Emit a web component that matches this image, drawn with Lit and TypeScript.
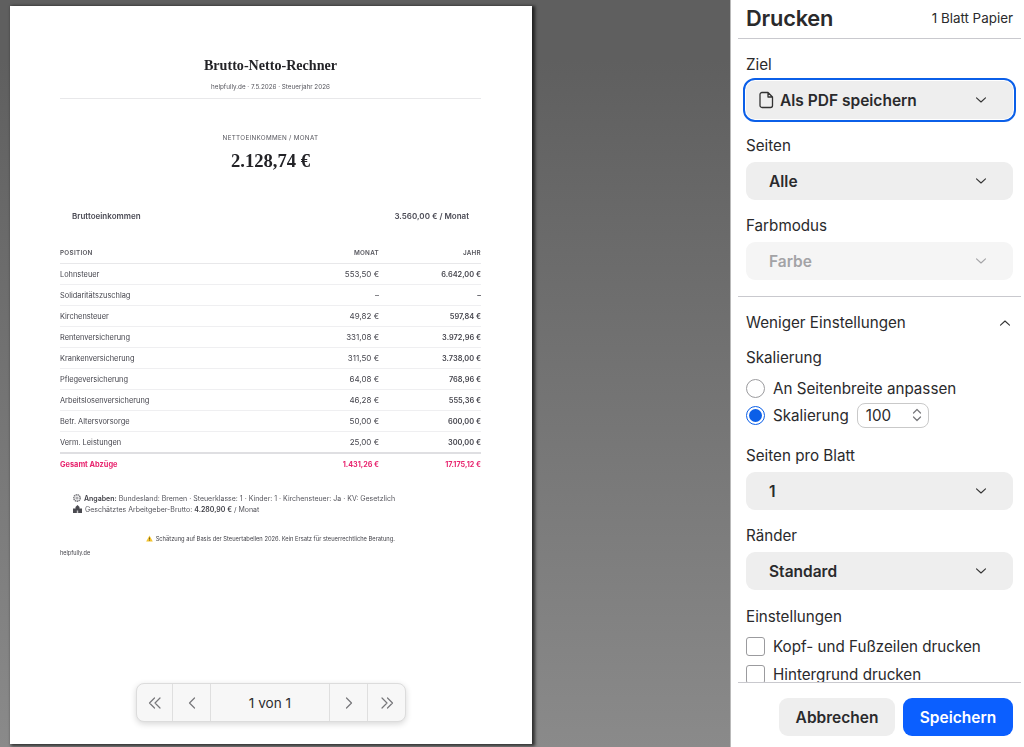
import { LitElement, html, css, svg } from 'lit';
import { customElement } from 'lit/decorators.js';

const rows = [
  ['Lohnsteuer', '553,50 €', '6.642,00 €'],
  ['Solidaritätszuschlag', '–', '–'],
  ['Kirchensteuer', '49,82 €', '597,84 €'],
  ['Rentenversicherung', '331,08 €', '3.972,96 €'],
  ['Krankenversicherung', '311,50 €', '3.738,00 €'],
  ['Pflegeversicherung', '64,08 €', '768,96 €'],
  ['Arbeitslosenversicherung', '46,28 €', '555,36 €'],
  ['Betr. Altersvorsorge', '50,00 €', '600,00 €'],
  ['Verm. Leistungen', '25,00 €', '300,00 €'],
];

const chevronDown = html`<svg class="chev" width="12" height="8" viewBox="0 0 12 8"><path d="M1.5 1.8 6 6l4.5-4.2" fill="none" stroke="currentColor" stroke-width="1.1" stroke-linecap="round" stroke-linejoin="round"/></svg>`;

const pager = (d: string) => html`<svg width="16" height="14" viewBox="0 0 16 14">${svg`<path d=${d} fill="none" stroke="#77777a" stroke-width="1.2" stroke-linecap="round" stroke-linejoin="round"/>`}</svg>`;

@customElement('app-root')
export class AppRoot extends LitElement {
  static styles = css`
    :host {
      display: block;
      width: 1024px;
      height: 747px;
      overflow: hidden;
      font-family: Inter, "Liberation Sans", sans-serif;
    }
    .screen {
      display: flex;
      height: 747px;
    }

    /* preview */
    .preview {
      position: relative;
      flex: 1;
      padding: 6px 198px 0 10px;
      background: linear-gradient(#5f5f5f 0, #5f5f5f 60px, #8a8a8a 100%);
    }
    .page {
      height: 738px;
      box-sizing: border-box;
      padding: 50px 51px 0 50px;
      background: #fff;
      box-shadow: 2px 1px 3px 1px rgba(0, 0, 0, 0.65);
      color: #45454d;
      font-size: 8px;
      filter: blur(0.3px);
    }
    .title {
      margin: 0;
      text-align: center;
      font-family: "Liberation Serif", serif;
      font-size: 14.1px;
      line-height: 18px;
      font-weight: 700;
      color: #232327;
    }
    .sub {
      margin-top: 8px;
      padding-bottom: 6px;
      border-bottom: 1px solid #e8e8ea;
      text-align: center;
      font-size: 6.3px;
      line-height: 10px;
      color: #55555c;
    }
    .net {
      margin-top: 35px;
      text-align: center;
    }
    .net-label {
      font-size: 6.3px;
      line-height: 9px;
      letter-spacing: 0.3px;
      color: #55555c;
    }
    .net-value {
      margin-top: 7px;
      font-family: "Liberation Serif", serif;
      font-size: 18.6px;
      line-height: 22px;
      font-weight: 700;
      color: #232327;
    }
    .gross {
      display: flex;
      justify-content: space-between;
      margin-top: 39px;
      padding: 0 12px;
      line-height: 11px;
      font-weight: 600;
      color: #4b4b55;
    }
    .table {
      margin-top: 24px;
    }
    .tr {
      display: grid;
      grid-template-columns: 1fr 102px 102px;
      align-items: center;
      height: 20px;
      border-bottom: 1px solid #efeff1;
    }
    .tr span:first-child {
      font-size: 7.4px;
    }
    .tr span:not(:first-child) {
      text-align: right;
    }
    .tr b {
      font-size: 7.4px;
      font-weight: 600;
    }
    .tr.head {
      height: 13px;
      padding-bottom: 4px;
      font-size: 6.3px;
      font-weight: 600;
      letter-spacing: 0.3px;
      color: #55555c;
      border-bottom-color: #e8e8ea;
    }
    .tr.head span:first-child {
      font-size: 6.3px;
    }
    .tr.last {
      border-bottom: 2px solid #dfdfe2;
    }
    .tr.total {
      height: 21px;
      border: 0;
      font-size: 7.2px;
      font-weight: 700;
      color: #e8256f;
    }
    .tr.total span:first-child {
      font-size: 7.4px;
    }
    .info {
      margin-top: 19px;
      padding-left: 13px;
      font-size: 7px;
      line-height: 10.5px;
      color: #55555c;
    }
    .info b {
      font-weight: 600;
      color: #3f3f46;
    }
    .info svg {
      vertical-align: -1px;
      margin-right: 1px;
    }
    .note {
      margin-top: 19px;
      text-align: center;
      font-size: 5.75px;
      line-height: 10px;
      color: #3f3f46;
    }
    .note svg {
      vertical-align: -1px;
      margin-right: 1px;
    }
    .foot {
      margin-top: 4px;
      font-size: 5.5px;
      line-height: 10px;
      color: #3f3f46;
    }
    .pager {
      position: absolute;
      left: 136px;
      top: 683px;
      display: flex;
      width: 270px;
      height: 39px;
      box-sizing: border-box;
      border: 1px solid #dcdcdc;
      border-radius: 8px;
      background: #f7f7f7;
      box-shadow: 0 2px 6px rgba(0, 0, 0, 0.16);
      font-size: 13.6px;
      color: #2c2c2e;
    }
    .pager div {
      display: flex;
      align-items: center;
      justify-content: center;
      width: 38px;
      box-sizing: border-box;
      border-right: 1px solid #dfdfdf;
    }
    .pager div:first-child {
      width: 36px;
    }
    .pager div:nth-child(3) {
      flex: 1;
    }
    .pager div:last-child {
      width: 37px;
      border-right: 0;
    }

    /* sidebar */
    .side {
      display: flex;
      flex-direction: column;
      width: 294px;
      box-sizing: border-box;
      border-left: 1px solid #b9b9b9;
      background: #fff;
      color: #2a2a2c;
      font-size: 15.2px;
    }
    .side-head {
      display: flex;
      align-items: center;
      justify-content: space-between;
      height: 39px;
      margin: 0 3px 0 7px;
      padding: 0 8px 3px 8px;
      box-sizing: border-box;
      border-bottom: 1px solid #c9c9ce;
    }
    .side-head h2 {
      margin: 0;
      font-size: 21.8px;
      font-weight: 600;
      letter-spacing: -0.2px;
    }
    .side-head span {
      font-size: 13.4px;
    }
    .scroll {
      flex: 1;
      min-height: 0;
      overflow: hidden;
      margin: 0 3px 0 7px;
      padding: 0 8px;
      border-bottom: 1px solid #c9c9ce;
    }
    .label {
      height: 19px;
      line-height: 19px;
      margin: 16px 0 7px;
    }
    .label.settings {
      margin-top: 17px;
    }
    .select {
      display: flex;
      align-items: center;
      justify-content: space-between;
      height: 38px;
      padding: 0 26px 0 23px;
      border-radius: 9px;
      background: #eeeeee;
      font-size: 15.5px;
      font-weight: 600;
    }
    .select.pdf {
      padding-left: 13px;
      margin-bottom: 17px;
      outline: 2.5px solid #0b5fe8;
      outline-offset: 1.5px;
    }
    .select.off {
      background: #f5f5f5;
      color: #a3a3a6;
    }
    .pdf-name {
      display: flex;
      align-items: center;
      gap: 6px;
    }
    .chev {
      color: #333;
    }
    .off .chev {
      color: #a3a3a6;
    }
    .rule {
      height: 1px;
      margin: 16px -8px 0 -8px;
      background: #c9c9ce;
    }
    .more {
      display: flex;
      align-items: center;
      justify-content: space-between;
      height: 19px;
      margin-top: 16px;
      padding-right: 2px;
    }
    .opt {
      display: flex;
      align-items: center;
      gap: 8px;
      height: 22px;
    }
    .opts {
      display: grid;
      row-gap: 5px;
      margin: 10px 0 20px;
    }
    .radio {
      width: 19px;
      height: 19px;
      box-sizing: border-box;
      border: 1px solid #9b9b9e;
      border-radius: 50%;
      background: #fff;
    }
    .radio.on {
      border: 1.5px solid #0b5fe8;
      padding: 2px;
      background: #0b5fe8 content-box;
    }
    .num {
      display: flex;
      align-items: center;
      justify-content: space-between;
      width: 72px;
      height: 25px;
      padding: 0 6px 0 8px;
      box-sizing: border-box;
      border: 1px solid #c9c9c9;
      border-radius: 8px;
    }
    .checks {
      display: grid;
      row-gap: 6px;
      margin-top: 9px;
    }
    .box {
      width: 19px;
      height: 19px;
      box-sizing: border-box;
      border: 1px solid #9b9b9e;
      border-radius: 3px;
    }
    .side-foot {
      display: flex;
      justify-content: flex-end;
      gap: 8px;
      height: 64px;
      box-sizing: border-box;
      padding: 15px 11px 0 0;
    }
    .btn {
      display: flex;
      align-items: center;
      justify-content: center;
      height: 38px;
      border-radius: 9px;
      font-size: 15.5px;
      font-weight: 600;
    }
    .cancel {
      width: 116px;
      background: #eeeeee;
    }
    .save {
      width: 110px;
      background: #0b5fff;
      color: #fff;
    }
  `;

  render() {
    return html`
      <div class="screen">
        <div class="preview">
          <div class="page">
            <h1 class="title">Brutto-Netto-Rechner</h1>
            <div class="sub">helpfully.de · 7.5.2026 · Steuerjahr 2026</div>
            <div class="net">
              <div class="net-label">NETTOEINKOMMEN / MONAT</div>
              <div class="net-value">2.128,74 €</div>
            </div>
            <div class="gross"><span>Bruttoeinkommen</span><span>3.560,00 € / Monat</span></div>
            <div class="table">
              <div class="tr head"><span>POSITION</span><span>MONAT</span><span>JAHR</span></div>
              ${rows.map(
                (r, i) => html`<div class="tr ${i === rows.length - 1 ? 'last' : ''}">
                  <span>${r[0]}</span><span>${r[1]}</span><span><b>${r[2]}</b></span>
                </div>`
              )}
              <div class="tr total"><span>Gesamt Abzüge</span><span>1.431,26 €</span><span>17.175,12 €</span></div>
            </div>
            <div class="info">
              <div>
                <svg width="8" height="8" viewBox="0 0 8 8"><circle cx="4" cy="4" r="3.2" fill="none" stroke="#77777c" stroke-width="1.5" stroke-dasharray="1.4 .5"/><circle cx="4" cy="4" r="1.6" fill="#a8a8ac"/></svg>
                <b>Angaben:</b> Bundesland: Bremen · Steuerklasse: 1 · Kinder: 1 · Kirchensteuer: Ja · KV: Gesetzlich
              </div>
              <div>
                <svg width="9" height="8" viewBox="0 0 9 8"><path d="M0 8V3.5h2.500V2L4.500 0l2 2v1.500H9V8z" fill="#4a4a50"/><path d="M3.800 8V5.500h1.400V8z" fill="#c9c9cc"/></svg>
                Geschätztes Arbeitgeber-Brutto: <b>4.280,90 €</b> / Monat
              </div>
            </div>
            <div class="note">
              <svg width="7" height="7" viewBox="0 0 7 7"><path d="M3.500.4 6.800 6.600H.2z" fill="#f4c430"/><path d="M3.500 2.400v2.200M3.500 5.200v.6" stroke="#4a3c10" stroke-width=".7"/></svg>
              Schätzung auf Basis der Steuertabellen 2026. Kein Ersatz für steuerrechtliche Beratung.
            </div>
            <div class="foot">helpfully.de</div>
          </div>
          <div class="pager">
            <div>${pager('M7.500 2 2.500 7l5 5M13 2 8 7l5 5')}</div>
            <div>${pager('M10.500 2 5.500 7l5 5')}</div>
            <div>1 von 1</div>
            <div>${pager('M5.500 2l5 5-5 5')}</div>
            <div>${pager('M3 2l5 5-5 5M8.500 2l5 5-5 5')}</div>
          </div>
        </div>

        <div class="side">
          <div class="side-head">
            <h2>Drucken</h2>
            <span>1 Blatt Papier</span>
          </div>
          <div class="scroll">
            <div class="label">Ziel</div>
            <div class="select pdf">
              <span class="pdf-name">
                <svg width="15" height="18" viewBox="0 0 15 18"><path d="M3 1.500h6l4.500 4.500v8.500a2 2 0 0 1-2 2h-8.500a2 2 0 0 1-2-2V3.500a2 2 0 0 1 2-2zM9 1.500V6h4.500" fill="none" stroke="#333" stroke-width="1.300" stroke-linejoin="round"/></svg>
                Als PDF speichern
              </span>
              ${chevronDown}
            </div>
            <div class="label">Seiten</div>
            <div class="select"><span>Alle</span>${chevronDown}</div>
            <div class="label">Farbmodus</div>
            <div class="select off"><span>Farbe</span>${chevronDown}</div>
            <div class="rule"></div>
            <div class="more">
              <span>Weniger Einstellungen</span>
              <svg width="12" height="8" viewBox="0 0 12 8"><path d="M1.500 6.200 6 2l4.500 4.200" fill="none" stroke="#333" stroke-width="1.100" stroke-linecap="round" stroke-linejoin="round"/></svg>
            </div>
            <div class="label">Skalierung</div>
            <div class="opts">
              <div class="opt"><span class="radio"></span>An Seitenbreite anpassen</div>
              <div class="opt">
                <span class="radio on"></span>Skalierung
                <span class="num">
                  100
                  <svg width="10" height="16" viewBox="0 0 10 16"><path d="M1.500 6 5 2.500 8.500 6M1.500 10 5 13.500 8.500 10" fill="none" stroke="#77777a" stroke-width="1.200" stroke-linecap="round" stroke-linejoin="round"/></svg>
                </span>
              </div>
            </div>
            <div class="label">Seiten pro Blatt</div>
            <div class="select"><span>1</span>${chevronDown}</div>
            <div class="label">Ränder</div>
            <div class="select"><span>Standard</span>${chevronDown}</div>
            <div class="label settings">Einstellungen</div>
            <div class="checks">
              <div class="opt"><span class="box"></span>Kopf- und Fußzeilen drucken</div>
              <div class="opt"><span class="box"></span>Hintergrund drucken</div>
            </div>
          </div>
          <div class="side-foot">
            <div class="btn cancel">Abbrechen</div>
            <div class="btn save">Speichern</div>
          </div>
        </div>
      </div>
    `;
  }
}
